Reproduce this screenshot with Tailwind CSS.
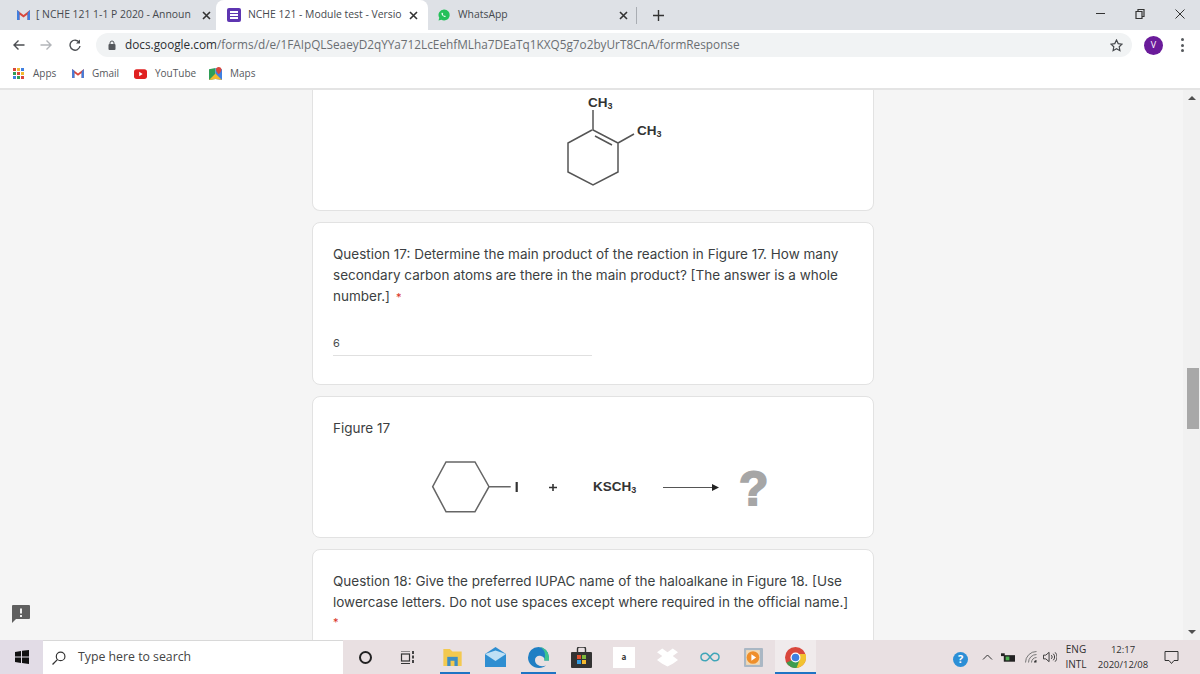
<!DOCTYPE html>
<html lang="en">
<head>
    <meta charset="UTF-8">
    <title>NCHE 121 - Module test</title>
    <script src="https://cdn.jsdelivr.net/npm/@tailwindcss/browser@4"></script>
</head>
<body class="bg-[#f5f5f5] font-['Liberation_Sans',sans-serif]">
<div class="w-[1200px] h-[674px] overflow-hidden flex flex-col">

    <!-- Tab strip -->
    <div class="h-[30px] bg-[#dee1e6] flex items-end text-[10.400px] text-[#45494e] font-['Open_Sans',sans-serif] shrink-0">
        <div class="w-[216px] h-[30px] flex items-center pl-[17px]">
            <svg class="w-[13px] h-[10px] shrink-0" viewBox="0 0 13 10"><path d="M0 10V0l6.500 5L13 0v10h-2.500V4.500L6.500 7.500 2.500 4.500V10z" fill="#d9473c"/><path d="M10.500 10V3L13 0v10z" fill="#3f7fe0"/><path d="M0 10V0l2.500 2v8z" fill="#3f7fe0"/></svg>
            <span class="ml-[6px] w-[163px] whitespace-nowrap">[ NCHE 121 1-1 P 2020 - Announ</span>
            <svg class="w-[9px] h-[9px] ml-[3px] shrink-0" viewBox="0 0 9 9"><path d="M1 1l7 7M8 1L1 8" stroke="#333" stroke-width="1.600"/></svg>
        </div>
        <div class="w-[212px] h-[30px] bg-white rounded-t-lg flex items-center pl-[11px]">
            <div class="w-[14px] h-[14px] bg-[#5e35b1] rounded-[2px] flex flex-col justify-center gap-[1.500px] px-[3px] shrink-0">
                <div class="h-[1.500px] bg-white"></div>
                <div class="h-[1.500px] bg-white"></div>
                <div class="h-[1.500px] bg-white"></div>
            </div>
            <span class="ml-[7px] w-[157px] whitespace-nowrap">NCHE 121 - Module test - Versio</span>
            <svg class="w-[9px] h-[9px] ml-[4px] shrink-0" viewBox="0 0 9 9"><path d="M1 1l7 7M8 1L1 8" stroke="#333" stroke-width="1.600"/></svg>
        </div>
        <div class="w-[208px] h-[30px] flex items-center pl-[10px]">
            <svg class="w-[12px] h-[12px] shrink-0" viewBox="0 0 12 12"><path d="M6 .500a5.500 5.500 0 0 0-4.700 8.300L.500 11.500l2.800-.8A5.500 5.500 0 1 0 6 .500z" fill="#25c05a"/><path d="M4 3.500c-.8.700-.6 2 .6 3.300 1.200 1.200 2.500 1.500 3.300.7l-1-1-.6.400c-.6-.2-1.300-.9-1.500-1.500l.4-.6z" fill="#fff"/></svg>
            <span class="ml-[8px] w-[161px]">WhatsApp</span>
            <svg class="w-[9px] h-[9px] shrink-0" viewBox="0 0 9 9"><path d="M1 1l7 7M8 1L1 8" stroke="#333" stroke-width="1.600"/></svg>
        </div>
        <div class="h-[30px] flex items-center">
            <div class="w-px h-[17px] bg-[#a9adb3]"></div>
            <svg class="w-[11px] h-[11px] ml-[16px]" viewBox="0 0 11 11"><path d="M5.500 0v11M0 5.500h11" stroke="#333" stroke-width="1.400"/></svg>
        </div>
        <div class="flex-1 h-[30px] flex items-center justify-end pr-[15px] gap-[30px]">
            <div class="w-[9px] h-[1.500px] bg-[#333] mt-[-3px]"></div>
            <svg class="w-[10px] h-[10px] mt-[-3px]" viewBox="0 0 10 10"><path d="M3 2.500V.500h6v7H7M1 2.500h6v7H1z" fill="none" stroke="#333" stroke-width="1.200"/></svg>
            <svg class="w-[10px] h-[10px] mt-[-3px]" viewBox="0 0 10 10"><path d="M.500.500l9 9M9.500.500l-9 9" stroke="#333" stroke-width="1"/></svg>
        </div>
    </div>

    <!-- Address bar -->
    <div class="h-[30px] bg-white flex items-center shrink-0">
        <svg class="w-[12px] h-[12px] ml-[13px]" viewBox="0 0 12 12"><path d="M11.500 6H1M5.500 1.500L1 6l4.500 4.500" fill="none" stroke="#4b4e52" stroke-width="1.400"/></svg>
        <svg class="w-[12px] h-[12px] ml-[15px]" viewBox="0 0 12 12"><path d="M.500 6H11M6.500 1.500L11 6l-4.500 4.500" fill="none" stroke="#b2b5b9" stroke-width="1.400"/></svg>
        <svg class="w-[12px] h-[12px] ml-[17px]" viewBox="0 0 12 12"><path d="M10.300 3.500A5 5 0 1 0 11 7" fill="none" stroke="#4b4e52" stroke-width="1.400"/><path d="M11 .500V4.500H7z" fill="#4b4e52"/></svg>
        <div class="w-[1036px] h-[24px] ml-[15px] bg-[#f1f3f4] rounded-full flex items-center relative font-['Open_Sans',sans-serif] text-[11.790px]">
            <svg class="w-[8px] h-[10px] ml-[12px] shrink-0" viewBox="0 0 8 10"><path d="M2 4.500V3a2 2 0 0 1 4 0v1.500" fill="none" stroke="#55585c" stroke-width="1"/><rect x=".500" y="4" width="7" height="6" rx="1" fill="#55585c"/></svg>
            <span class="ml-[9px] whitespace-nowrap text-[#6a6e72]"><span class="text-[#2c2f33]">docs.google.com</span>/forms/d/e/1FAIpQLSeaeyD2qYYa712LcEehfMLha7DEaTq1KXQ5g7o2byUrT8CnA/formResponse</span>
            <svg class="w-[13px] h-[13px] absolute right-[9px] top-[5.500px]" viewBox="0 0 13 13"><path d="M6.500 1l1.700 3.600 3.800.5-2.800 2.700.7 3.900-3.400-1.900-3.400 1.900.7-3.900L1 5.100l3.800-.5z" fill="none" stroke="#45484c" stroke-width="1.200"/></svg>
        </div>
        <div class="w-[19px] h-[19px] ml-[12px] rounded-full bg-[#6a1b9a] text-white text-[9px] flex items-center justify-center font-['Open_Sans',sans-serif]">V</div>
        <div class="ml-[18px] flex flex-col gap-[2.500px]">
            <div class="w-[3px] h-[3px] rounded-full bg-[#55585c]"></div>
            <div class="w-[3px] h-[3px] rounded-full bg-[#55585c]"></div>
            <div class="w-[3px] h-[3px] rounded-full bg-[#55585c]"></div>
        </div>
    </div>

    <!-- Bookmarks -->
    <div class="h-[30px] bg-white border-b-2 border-[#e4e4e4] flex items-center text-[10px] text-[#55585c] font-['Open_Sans',sans-serif] shrink-0 pb-[1px]">
        <div class="ml-[13px] w-[11px] h-[11px] grid grid-cols-3 gap-[1.500px]">
            <div class="bg-[#d9473c]"></div><div class="bg-[#f2b92e]"></div><div class="bg-[#3f7fe0]"></div>
            <div class="bg-[#2f9e57]"></div><div class="bg-[#d9473c]"></div><div class="bg-[#f2b92e]"></div>
            <div class="bg-[#3f7fe0]"></div><div class="bg-[#2f9e57]"></div><div class="bg-[#d9473c]"></div>
        </div>
        <span class="ml-[9px] w-[24px]">Apps</span>
        <svg class="w-[12px] h-[9px] ml-[15px]" viewBox="0 0 13 10"><path d="M0 10V0l6.500 5L13 0v10h-2.500V4.500L6.500 7.500 2.500 4.500V10z" fill="#d9473c"/><path d="M10.500 10V3L13 0v10z" fill="#3f7fe0"/><path d="M0 10V0l2.500 2v8z" fill="#3f7fe0"/></svg>
        <span class="ml-[8px] w-[27px]">Gmail</span>
        <svg class="w-[13px] h-[10px] ml-[15px]" viewBox="0 0 12 9"><rect width="12" height="9" rx="2.500" fill="#e02020"/><path d="M4.800 2.500v4L8 4.500z" fill="#fff"/></svg>
        <span class="ml-[8px] w-[40px]">YouTube</span>
        <svg class="w-[13px] h-[13px] ml-[14px]" viewBox="0 0 12 12"><path d="M0 2l6-1v10l-6 1z" fill="#2f9e57"/><path d="M6 1l6 1v10l-6-1z" fill="#3f7fe0"/><path d="M0 12l6-6 6 6-6-1z" fill="#f2b92e"/><path d="M9 0a2.500 2.500 0 0 0-2.500 2.500C6.500 4.500 9 6.500 9 6.500s2.500-2 2.500-4A2.500 2.500 0 0 0 9 0z" fill="#d9473c"/></svg>
        <span class="ml-[8px]">Maps</span>
    </div>

    <!-- Page content -->
    <div class="flex-1 flex min-h-0 relative">
        <div class="flex-1 flex flex-col items-center overflow-hidden pl-[3px] text-[#3c3f42] font-['Inter',sans-serif] text-[13.500px] leading-[21px]">
            <div class="w-[562px] h-[121px] shrink-0 bg-white rounded-b-lg border border-t-0 border-[#e2e2e2] pl-[227px]">
                <svg class="w-[140px] h-[105px]" viewBox="0 0 140 105">
                    <path d="M53 20v20L78 53v29L53 95 28 82V53L52 40M55 46l17 9M78 53l16-9" fill="none" stroke="#555" stroke-width="1.500"/>
                    <text x="48" y="17" font-family="Liberation Sans" font-size="13.500" font-weight="700" fill="#333">CH<tspan font-size="9" dy="2">3</tspan></text>
                    <text x="97" y="45" font-family="Liberation Sans" font-size="13.500" font-weight="700" fill="#333">CH<tspan font-size="9" dy="2">3</tspan></text>
                </svg>
            </div>
            <div class="w-[562px] h-[163px] mt-[11px] shrink-0 bg-white rounded-lg border border-[#e2e2e2] pt-[21px] px-[20px]">
                <p>Question 17: Determine the main product of the reaction in Figure 17. How many secondary carbon atoms are there in the main product? [The answer is a whole number.]<span class="ml-[6px] text-[#d93025] text-[11px]">*</span></p>
                <div class="w-[259px] mt-[25px] border-b border-[#e0e0e0] h-[23px] text-[11px] text-[#4a4d50]">6</div>
            </div>
            <div class="w-[562px] h-[142px] mt-[11px] shrink-0 bg-white rounded-lg border border-[#e2e2e2] pt-[21px] px-[20px] relative">
                <p>Figure 17</p>
                <svg class="absolute left-[107px] top-[53px] w-[370px] h-[70px]" viewBox="0 0 370 70">
                    <path d="M12.700 36.700L26 12H55L69 36.700L55 61.700H26zM69 36.700H90.700" fill="none" stroke="#666" stroke-width="1.500"/>
                    <path d="M96.700 32v10" stroke="#333" stroke-width="2.200"/>
                    <path d="M133 34v7M129 37.500h8" stroke="#333" stroke-width="1.600"/>
                    <text x="173" y="41" font-family="Liberation Sans" font-size="13.500" font-weight="700" fill="#333">KSCH<tspan font-size="9" dy="2">3</tspan></text>
                    <path d="M243 37.500h50" stroke="#555" stroke-width="1.200"/>
                    <path d="M292 34v7l7-3.500z" fill="#222"/>
                    <text x="319" y="55" font-family="Liberation Sans" font-size="48" font-weight="700" fill="#a6a6a6" stroke="#a6a6a6" stroke-width="2">?</text>
                </svg>
            </div>
            <div class="w-[562px] h-[120px] mt-[11px] shrink-0 bg-white rounded-t-lg border border-[#e2e2e2] pt-[21px] px-[20px]">
                <p>Question 18: Give the preferred IUPAC name of the haloalkane in Figure 18. [Use lowercase letters. Do not use spaces except where required in the official name.]</p>
                <span class="text-[#d93025] text-[11px] leading-[18px] block">*</span>
            </div>
        </div>

        <!-- Scrollbar -->
        <div class="w-[17px] bg-[#f1f1f1] flex flex-col items-center justify-between py-[6px] relative">
            <div class="w-0 h-0 border-x-[4px] border-x-transparent border-b-[4px] border-b-[#505050]"></div>
            <div class="w-0 h-0 border-x-[4px] border-x-transparent border-t-[4px] border-t-[#505050]"></div>
            <div class="absolute left-[4px] top-[278px] w-[12px] h-[61px] bg-[#a8a8a8]"></div>
        </div>

        <!-- Feedback button -->
        <svg class="absolute left-[12px] top-[515px] w-[18px] h-[18px]" viewBox="0 0 18 18">
            <path d="M1 0h16a1 1 0 0 1 1 1v12a1 1 0 0 1-1 1H4l-4 4V1a1 1 0 0 1 1-1z" fill="#5f5f5f"/>
            <path d="M9 3.500v5M9 10v2" stroke="#fff" stroke-width="1.800"/>
        </svg>
    </div>

    <!-- Taskbar -->
    <div class="h-[34px] bg-[#e9e0e2] flex items-center shrink-0 relative text-[#2f2f2f] font-['Open_Sans',sans-serif]">
        <div class="w-[43px] h-[34px] bg-[#e2dce6] flex items-center justify-center">
            <svg class="w-[14px] h-[14px]" viewBox="0 0 14 14"><path d="M0 2l6-1v5.500H0zM7 .800L14 0v6.500H7zM0 7.500h6V13l-6-1zM7 7.500h7V14l-7-1z" fill="#111"/></svg>
        </div>
        <div class="w-[300px] h-[34px] bg-white border-t border-[#d8d8d8] flex items-center pl-[9px]">
            <svg class="w-[14px] h-[14px]" viewBox="0 0 13 13"><circle cx="8" cy="5" r="4" fill="none" stroke="#333" stroke-width="1.100"/><path d="M5 8l-4.500 4.500" stroke="#333" stroke-width="1.200"/></svg>
            <span class="ml-[12px] text-[12.300px] text-[#444]">Type here to search</span>
        </div>
        <div class="w-[13px] h-[13px] ml-[16px] rounded-full border-2 border-[#222]"></div>
        <svg class="w-[15px] h-[13px] ml-[28px]" viewBox="0 0 15 13"><path d="M1 0h9M1 12.500h9" stroke="#333" stroke-width="1.200"/><rect x="1.500" y="3" width="8" height="7" fill="none" stroke="#333" stroke-width="1.200"/><path d="M13 0v3M13 4.500v3M13 9v3" stroke="#333" stroke-width="1.800"/></svg>
        <div class="ml-[28px] w-[19px] h-[34px] relative">
            <svg class="absolute top-[9px] left-0 w-[19px] h-[17px]" viewBox="0 0 14 13"><path d="M0 0h5l2 2h7v11H0z" fill="#f3c94f"/><rect x="3" y="6" width="8" height="7" fill="#3e8ec4"/><rect x="5.500" y="9" width="3" height="4" fill="#f3c94f"/></svg>
            <div class="absolute bottom-0 left-[-3px] w-[30px] h-[2px] bg-[#1f74c4]"></div>
        </div>
        <svg class="w-[21px] h-[20px] ml-[23px]" viewBox="0 0 21 20"><path d="M0 7L10.500 0 21 7v13H0z" fill="#2f8ed1"/><path d="M0 7l10.500 7L21 7 10.500 3.500z" fill="#bfe0f5"/></svg>
        <div class="ml-[22px] w-[21px] h-[34px] relative">
            <svg class="absolute top-[7px] left-0 w-[21px] h-[21px]" viewBox="0 0 21 21"><path d="M10.500 0A10.500 10.500 0 0 0 0 10.500C0 16.500 5 21 11 21c3 0 5-1 7-2.500-6 2-11-1-11-5.500 0-3 3-5 6-4 3 .8 4 3 3.500 4.500H21v-3A10.500 10.500 0 0 0 10.500 0z" fill="#1f7fc4"/><path d="M21 13.500V10.500A10.500 10.500 0 0 0 10.500 0C15 1 17 4 17 8c0 3-1 5.500-1 5.500z" fill="#3cc48f"/></svg>
            <div class="absolute bottom-0 left-[-7px] w-[35px] h-[2px] bg-[#1f74c4]"></div>
        </div>
        <svg class="w-[21px] h-[21px] ml-[22px]" viewBox="0 0 21 21"><path d="M6.500 5V2a2 2 0 0 1 2-2h4a2 2 0 0 1 2 2v3" fill="none" stroke="#333" stroke-width="1.400"/><rect y="5" width="21" height="16" rx="1" fill="#333"/><rect x="6" y="8" width="4" height="4" fill="#e2502e"/><rect x="11" y="8" width="4" height="4" fill="#7fba3c"/><rect x="6" y="13" width="4" height="4" fill="#2f9ae0"/><rect x="11" y="13" width="4" height="4" fill="#f3b92e"/></svg>
        <div class="ml-[21px] w-[22px] h-[21px] bg-white flex items-center justify-center text-[8px] font-bold text-[#333]">a</div>
        <svg class="w-[21px] h-[19px] ml-[22px]" viewBox="0 0 22 19"><path d="M5.500 0L0 4l5.500 4L0 12l5.500 4 5.500 3 5.500-3 5.500-4-5.500-4L22 4l-5.500-4L11 4z" fill="#fff"/></svg>
        <svg class="w-[20px] h-[10px] ml-[22px]" viewBox="0 0 21 10"><path d="M6 9C3 9 1 7.500 1 5s2-4 5-4 6 8 9 8 5-1.500 5-4-2-4-5-4-6 8-9 8z" fill="none" stroke="#3fa5b8" stroke-width="1.500"/></svg>
        <svg class="w-[19px] h-[19px] ml-[24px]" viewBox="0 0 18 18"><rect width="18" height="18" rx="1" fill="#aab7c4"/><rect x="2" y="2" width="13" height="14" fill="#f1d9b5"/><circle cx="8.500" cy="9" r="6" fill="#ef8f2a"/><path d="M7 6v6l4.500-3z" fill="#fff"/></svg>
        <div class="ml-[12px] w-[41px] h-[34px] bg-[#f0ebec] relative flex items-center justify-center">
            <svg class="w-[21px] h-[21px]" viewBox="0 0 21 21"><circle cx="10.500" cy="10.500" r="10.500" fill="#d9473c"/><path d="M1.400 15.700A10.500 10.500 0 0 0 13 20.700l5-9.200H10.500z" fill="#3d9c4f"/><path d="M20.500 7H10.500l5 3.500-4 10.500A10.500 10.500 0 0 0 20.500 7z" fill="#f2c230"/><circle cx="10.500" cy="10.500" r="5" fill="#fff"/><circle cx="10.500" cy="10.500" r="3.800" fill="#3f7fe0"/></svg>
            <div class="absolute bottom-0 left-0 w-full h-[2px] bg-[#1f74c4]"></div>
        </div>

        <div class="absolute right-0 top-0 h-[34px] flex items-center">
            <div class="w-[15px] h-[15px] mt-[4px] rounded-full bg-[#2c8fd6] text-white text-[11px] font-bold flex items-center justify-center">?</div>
            <svg class="w-[11px] h-[6px] ml-[14px]" viewBox="0 0 10 6"><path d="M.500 5.500L5 1l4.500 4.500" fill="none" stroke="#333" stroke-width="1"/></svg>
            <svg class="w-[14px] h-[9px] ml-[8px]" viewBox="0 0 15 9"><rect x="3" y="2" width="12" height="7" fill="#222"/><rect y="0" width="4" height="3" fill="#222"/><rect x="5" y="3.500" width="4" height="4" fill="#4caf50"/></svg>
            <svg class="w-[12px] h-[12px] ml-[10px]" viewBox="0 0 12 12"><path d="M.500 11.500A11 11 0 0 1 11.500.500M3.500 11.500A8 8 0 0 1 11.500 3.500M6.500 11.500A5 5 0 0 1 11.500 6.500" fill="none" stroke="#777" stroke-width="1"/><path d="M9 11.500a2.500 2.500 0 0 1 2.500-2.500v2.500z" fill="#333"/></svg>
            <svg class="w-[14px] h-[12px] ml-[6px]" viewBox="0 0 15 12"><path d="M.500 4h2.500L6.500 1v10L3 8H.500z" fill="none" stroke="#333" stroke-width="1"/><path d="M9 4a3 3 0 0 1 0 4M11 2.500a5 5 0 0 1 0 7M13 1a7 7 0 0 1 0 10" fill="none" stroke="#333" stroke-width="1"/></svg>
            <div class="ml-[4px] w-[30px] text-[10px] leading-[15px] text-center">ENG<br>INTL</div>
            <div class="w-[64px] text-[9.500px] leading-[15px] text-center">12:17<br>2020/12/08</div>
            <svg class="w-[15px] h-[13px] ml-[9px] mr-[21px]" viewBox="0 0 14 13"><path d="M.500.500h13v9H9.500L7 12.500 4.500 9.500H.500z" fill="none" stroke="#333" stroke-width="1"/></svg>
        </div>
    </div>
</div>
</body>
</html>
